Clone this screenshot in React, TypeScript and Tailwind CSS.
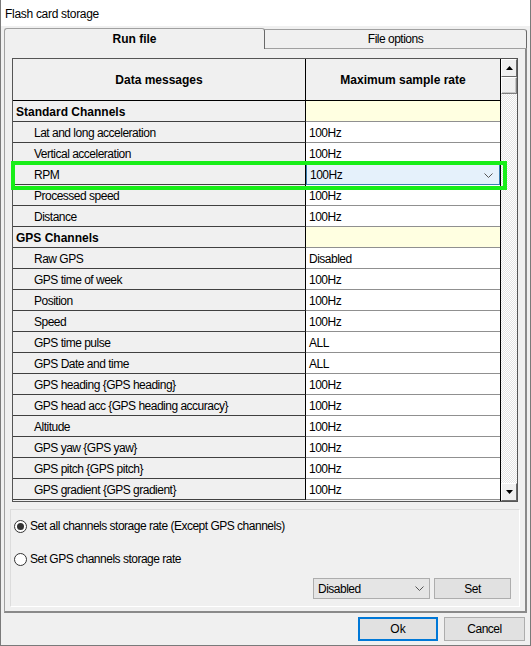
import React from "react";

type Row = {
  label: string;
  value?: string;
  section?: boolean;
  selected?: boolean;
};

const rows: Row[] = [
  { label: "Standard Channels", section: true },
  { label: "Lat and long acceleration", value: "100Hz" },
  { label: "Vertical acceleration", value: "100Hz" },
  { label: "RPM", value: "100Hz", selected: true },
  { label: "Processed speed", value: "100Hz" },
  { label: "Distance", value: "100Hz" },
  { label: "GPS Channels", section: true },
  { label: "Raw GPS", value: "Disabled" },
  { label: "GPS time of week", value: "100Hz" },
  { label: "Position", value: "100Hz" },
  { label: "Speed", value: "100Hz" },
  { label: "GPS time pulse", value: "ALL" },
  { label: "GPS Date and time", value: "ALL" },
  { label: "GPS heading {GPS heading}", value: "100Hz" },
  { label: "GPS head acc {GPS heading accuracy}", value: "100Hz" },
  { label: "Altitude", value: "100Hz" },
  { label: "GPS yaw {GPS yaw}", value: "100Hz" },
  { label: "GPS pitch {GPS pitch}", value: "100Hz" },
  { label: "GPS gradient {GPS gradient}", value: "100Hz" },
];

const Chevron = () => (
  <svg width="9" height="5" viewBox="0 0 9 5" className="shrink-0">
    <path d="M0.5 0.5 L4.5 4.5 L8.5 0.5" fill="none" stroke="#555" strokeWidth="1" />
  </svg>
);

const Arrow = ({ down }: { down?: boolean }) => (
  <svg width="7" height="4" viewBox="0 0 7 4">
    <path d={down ? "M0 0 L7 0 L3.5 4 Z" : "M0 4 L7 4 L3.5 0 Z"} fill="#000" />
  </svg>
);

const Radio = ({ checked, label }: { checked?: boolean; label: string }) => (
  <div className="flex items-center gap-[3px]">
    <div className="w-[13px] h-[13px] rounded-full border border-[#333] bg-white flex items-center justify-center">
      {checked && <div className="w-[7px] h-[7px] rounded-full bg-[#333]" />}
    </div>
    <span className="tracking-[-0.5px]">{label}</span>
  </div>
);

const ScrollButton = ({ down }: { down?: boolean }) => (
  <div className="h-[18px] flex items-center justify-center bg-[#f0f0f0] border-t border-l border-white border-r border-b border-r-[#696969] border-b-[#696969]">
    <Arrow down={down} />
  </div>
);

export default function App() {
  return (
    <div
      className="w-[531px] h-[646px] bg-[#f0f0f0] border-x border-b border-[#7a7a7a] flex flex-col text-[12px] text-black overflow-hidden"
      style={{ fontFamily: '"Liberation Sans", Arial, sans-serif' }}
    >
      {/* title */}
      <div className="h-[26px] bg-white flex items-center px-[4px] pt-px tracking-[-0.3px]">Flash card storage</div>

      {/* tabs */}
      <div className="flex px-[3px] pt-[2px] h-[22px] items-end">
        <div className="w-[261px] h-[21px] bg-[#f0f0f0] border-l border-t border-[#a0a0a0] border-r border-r-[#696969] rounded-t-[3px] flex items-center justify-center font-bold relative z-10 -mb-px">
          Run file
        </div>
        <div className="flex-1 h-[19px] bg-[#f0f0f0] border-t border-r border-[#a0a0a0] border-r-[#696969] rounded-tr-[3px] flex items-center justify-center tracking-[-0.5px]">
          File options
        </div>
      </div>

      {/* panel */}
      <div className="mx-[3px] h-[565px] border-l border-t border-[#a0a0a0] border-r-2 border-b-2 border-r-[#8a8a8a] border-b-[#8a8a8a] flex flex-col px-[7px] pt-[9px]">
        <div className="relative h-[444px] border border-[#555] bg-[#f0f0f0] flex">
          <div className="flex-1 flex flex-col">
            {/* header */}
            <div className="h-[42px] flex border-b border-black font-bold shrink-0">
              <div className="w-[293px] border-r border-black flex items-center justify-center">Data messages</div>
              <div className="flex-1 flex items-center justify-center">Maximum sample rate</div>
            </div>
            {rows.map((r) => (
              <div key={r.label} className="h-[21px] flex shrink-0">
                <div
                  className={`w-[293px] border-r border-black border-b border-b-[#404040] flex items-center pt-px ${
                    r.section ? "pl-[3px] font-bold" : "pl-[21px] tracking-[-0.5px]"
                  }`}
                >
                  {r.label}
                </div>
                <div
                  className={`flex-1 border-b flex items-center pt-px tracking-[-0.5px] ${
                    r.section
                      ? "bg-[#ffffe1] border-b-[#909090]"
                      : r.selected
                      ? "bg-[#e5f1fb] border border-[#3c7fb1] pl-[3px] pr-[6px] justify-between"
                      : "bg-white border-b-[#909090] pl-[3px]"
                  }`}
                >
                  {r.value}
                  {r.selected && <Chevron />}
                </div>
              </div>
            ))}
          </div>
          {/* scrollbar */}
          <div className="w-[17px] border-l border-black flex flex-col">
            <ScrollButton />
            <div className="h-[17px] bg-[#f0f0f0] border border-t-white border-l-white border-r-[#808080] border-b-[#808080] shadow-[inset_-1px_-1px_0_#c8c8c8]" />
            <div className="flex-1 bg-[repeating-conic-gradient(#ffffff_0_25%,#e4e4e4_0_50%)] bg-[length:2px_2px]" />
            <ScrollButton down />
          </div>

          {/* green highlight on the RPM row */}
          <div className="absolute left-[-2px] top-[102px] w-[496px] h-[29px] border-[4px] border-[#18ee18] pointer-events-none" />
        </div>

        {/* options */}
        <div className="mt-[7px] -mx-[2px] h-[98px] border border-[#dcdcdc] border-r-white border-b-white flex flex-col px-[3px]">
          <div className="mt-[7px]">
            <Radio checked label="Set all channels storage rate (Except GPS channels)" />
          </div>
          <div className="mt-[15px]">
            <Radio label="Set GPS channels storage rate" />
          </div>
          <div className="mt-[10px] flex justify-end gap-[4px] pr-[5px]">
            <div className="w-[117px] h-[21px] bg-[#e5e5e5] border border-[#adadad] flex items-center justify-between pl-[4px] pr-[5px] tracking-[-0.5px]">
              Disabled
              <Chevron />
            </div>
            <div className="w-[77px] h-[21px] bg-[#e1e1e1] border border-[#adadad] flex items-center justify-center tracking-[-0.5px]">
              Set
            </div>
          </div>
        </div>
      </div>

      {/* buttons */}
      <div className="flex justify-end gap-[6px] pr-[5px] mt-[4px]">
        <div className="w-[80px] h-[24px] bg-[#e1e1e1] border-2 border-[#0078d7] flex items-center justify-center">Ok</div>
        <div className="w-[81px] h-[24px] bg-[#e1e1e1] border border-[#adadad] flex items-center justify-center tracking-[-0.5px]">
          Cancel
        </div>
      </div>
    </div>
  );
}
